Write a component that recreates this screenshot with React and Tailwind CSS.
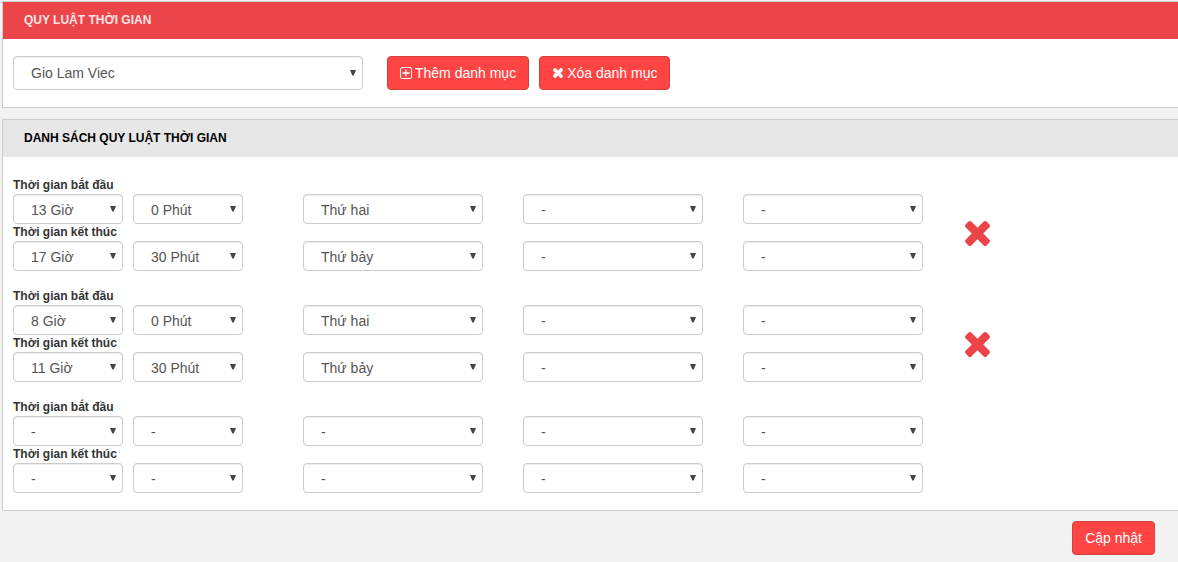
import React from 'react';

const hours = ['-', ...Array.from({ length: 24 }, (_, i) => `${i} Giờ`)];
const minutes = ['-', '0 Phút', '15 Phút', '30 Phút', '45 Phút'];
const weekdays = ['-', 'Thứ hai', 'Thứ ba', 'Thứ tư', 'Thứ năm', 'Thứ sáu', 'Thứ bảy', 'Chủ nhật'];
const days = ['-', ...Array.from({ length: 31 }, (_, i) => `Ngày ${i + 1}`)];
const months = ['-', ...Array.from({ length: 12 }, (_, i) => `Tháng ${i + 1}`)];

const rules = [
  {
    start: { hour: '13 Giờ', minute: '0 Phút', weekday: 'Thứ hai' },
    end: { hour: '17 Giờ', minute: '30 Phút', weekday: 'Thứ bảy' },
    removable: true,
  },
  {
    start: { hour: '8 Giờ', minute: '0 Phút', weekday: 'Thứ hai' },
    end: { hour: '11 Giờ', minute: '30 Phút', weekday: 'Thứ bảy' },
    removable: true,
  },
  {
    start: { hour: '-', minute: '-', weekday: '-' },
    end: { hour: '-', minute: '-', weekday: '-' },
    removable: false,
  },
];

const CrossIcon = ({ className }) => (
  <svg viewBox="302 366 1188 1188" fill="currentColor" className={className} aria-hidden="true">
    <path d="M1490 1322q0 40-28 68l-136 136q-28 28-68 28t-68-28l-294-294-294 294q-28 28-68 28t-68-28l-136-136q-28-28-28-68t28-68l294-294-294-294q-28-28-28-68t28-68l136-136q28-28 68-28t68 28l294 294 294-294q28-28 68-28t68 28l136 136q28 28 28 68t-28 68l-294 294 294 294q28 28 28 68z" />
  </svg>
);

const PlusSquareIcon = ({ className }) => (
  <svg viewBox="0 0 12 12" fill="none" stroke="currentColor" className={className} aria-hidden="true">
    <rect x="0.5" y="0.5" width="11" height="11" rx="1.5" />
    <path d="M6 2.5v7M2.5 6h7" strokeWidth="1.4" />
  </svg>
);

const Select = ({ id, label, options, value, className, size = 'h-[30px] pt-0.5' }) => (
  <div className={`relative ${className}`}>
    <select
      id={id}
      aria-label={label}
      defaultValue={value}
      className={`block w-full ${size} appearance-none rounded border border-[#ccc] bg-white pl-[17px] pr-5 text-sm text-[#555] shadow-[inset_0_1px_1px_rgba(0,0,0,0.075)]`}
    >
      {options.map((option) => (
        <option key={option}>{option}</option>
      ))}
    </select>
    <span className="pointer-events-none absolute inset-y-0 right-[7px] flex items-center">
      <svg viewBox="0 0 6 8" className="h-2 w-1.5 fill-[#444]" aria-hidden="true">
        <path d="M0 1h6L3.7 6.6H2.3z" />
      </svg>
    </span>
  </div>
);

const Button = ({ children }) => (
  <button
    type="button"
    className="flex h-[34px] items-center gap-[3px] rounded border border-[#d43f3a] bg-[#ff4444] px-3 text-sm text-white"
  >
    {children}
  </button>
);

const Panel = ({ title, headerClass, children }) => (
  <section className="border border-r-0 border-[#ccc] bg-white">
    <h2 className={`h-[37px] px-[21px] text-xs leading-9 font-bold uppercase ${headerClass}`}>{title}</h2>
    {children}
  </section>
);

const TimeRow = ({ id, label, time }) => (
  <div>
    <label htmlFor={id} className="block h-[17px] text-xs leading-4 font-bold text-[#333]">
      {label}
    </label>
    <div className="flex gap-10">
      <div className="mr-5 flex gap-2.5">
        <Select id={id} options={hours} value={time.hour} className="w-[110px]" />
        <Select label={`${label} - phút`} options={minutes} value={time.minute} className="w-[110px]" />
      </div>
      <Select label={`${label} - thứ`} options={weekdays} value={time.weekday} className="w-[180px]" />
      <Select label={`${label} - ngày`} options={days} value="-" className="w-[180px]" />
      <Select label={`${label} - tháng`} options={months} value="-" className="w-[180px]" />
    </div>
  </div>
);

const App = () => {
  return (
    <main className="min-h-screen bg-[#f2f2f2] pt-px pl-0.5 font-['Liberation_Sans',Arial,sans-serif]">
      <Panel title="Quy luật thời gian" headerClass="bg-[#ec4549] text-[#fde3e3]">
        <div className="flex items-center gap-2.5 px-2.5 py-[17px]">
          <Select
            label="Danh mục"
            options={['Gio Lam Viec']}
            value="Gio Lam Viec"
            className="mr-3.5 w-[350px]"
            size="h-[34px]"
          />
          <Button>
            <PlusSquareIcon className="size-3" />
            Thêm danh mục
          </Button>
          <Button>
            <CrossIcon className="size-3 stroke-current stroke-[60] p-px" />
            Xóa danh mục
          </Button>
        </div>
      </Panel>

      <div className="mt-[11px]">
        <Panel title="Danh sách quy luật thời gian" headerClass="bg-[#e7e7e7] text-black">
          <div className="flex flex-col gap-[17px] px-2.5 pt-5 pb-[17px]">
            {rules.map((rule, index) => (
              <div key={index} className="flex items-center gap-[42px]">
                <div>
                  <TimeRow id={`start-${index}`} label="Thời gian bắt đầu" time={rule.start} />
                  <TimeRow id={`end-${index}`} label="Thời gian kết thúc" time={rule.end} />
                </div>
                {rule.removable && (
                  <button type="button" aria-label="Xóa" className="mt-[19px] text-[#ec4549]">
                    <CrossIcon className="size-[25px]" />
                  </button>
                )}
              </div>
            ))}
          </div>
        </Panel>
      </div>

      <div className="flex justify-end pt-2.5 pr-[23px] pb-[7px]">
        <Button>Cập nhật</Button>
      </div>
    </main>
  );
};

export default App;
